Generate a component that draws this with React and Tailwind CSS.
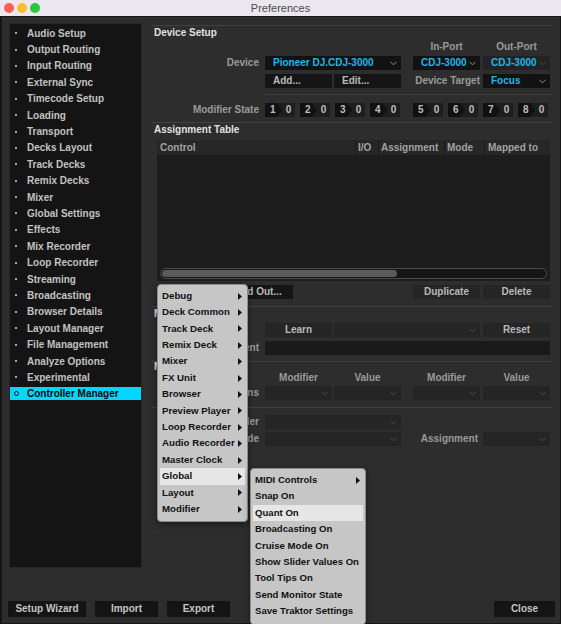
import React from "react";

function Chev({ dim }) {
  return (
    <svg width="7" height="5" viewBox="0 0 7 5" className="shrink-0">
      <polyline
        points="0.5,0.8 3.5,3.8 6.5,0.8"
        fill="none"
        stroke={dim ? "#4c4c4c" : "#909090"}
        strokeWidth="1"
      />
    </svg>
  );
}

function Drop({ cls, text, textCls = "", dim, bg = "bg-[#121212]" }) {
  return (
    <div className={`${cls} ${bg} h-[14px] flex items-center pl-[8px] pr-[4px]`}>
      <div className={`flex-1 overflow-hidden whitespace-nowrap leading-[14px] ${textCls}`}>{text}</div>
      <Chev dim={dim} />
    </div>
  );
}

function Btn({ cls, children, center, bg = "bg-[#151515]" }) {
  return (
    <div
      className={`${cls} ${bg} h-[14px] leading-[14px] whitespace-nowrap overflow-hidden text-[#b9b9b9] ${
        center ? "text-center" : "pl-[8px]"
      }`}
    >
      {children}
    </div>
  );
}

function Label({ children }) {
  return (
    <div className="w-[107px] flex justify-end whitespace-nowrap text-[#9a9a9a] leading-[14px]">
      {children}
    </div>
  );
}

function Mod({ n, cls }) {
  return (
    <div className={`${cls} w-[30px] h-[14px] bg-[#1e1e1e] flex text-[#bdbdbd] leading-[14px]`}>
      <div className="w-[17px] h-full bg-[#111111] [clip-path:polygon(0_0,70%_0,100%_50%,70%_100%,0_100%)] pl-[5px]">
        {n}
      </div>
      <div className="flex-1 text-center">0</div>
    </div>
  );
}

function Sep({ cls = "" }) {
  return <div className={`h-px bg-[#414141] ${cls}`} />;
}

function Arrow() {
  return (
    <svg width="4" height="7" viewBox="0 0 4 7" className="shrink-0">
      <polygon points="0,0 4,3.5 0,7" fill="#111" />
    </svg>
  );
}

const sidebarItems = [
  "Audio Setup",
  "Output Routing",
  "Input Routing",
  "External Sync",
  "Timecode Setup",
  "Loading",
  "Transport",
  "Decks Layout",
  "Track Decks",
  "Remix Decks",
  "Mixer",
  "Global Settings",
  "Effects",
  "Mix Recorder",
  "Loop Recorder",
  "Streaming",
  "Broadcasting",
  "Browser Details",
  "Layout Manager",
  "File Management",
  "Analyze Options",
  "Experimental",
  "Controller Manager",
];

const menu1 = [
  "Debug",
  "Deck Common",
  "Track Deck",
  "Remix Deck",
  "Mixer",
  "FX Unit",
  "Browser",
  "Preview Player",
  "Loop Recorder",
  "Audio Recorder",
  "Master Clock",
  "Global",
  "Layout",
  "Modifier",
];

const menu2 = [
  { t: "MIDI Controls", sub: true },
  { t: "Snap On" },
  { t: "Quant On", hl: true },
  { t: "Broadcasting On" },
  { t: "Cruise Mode On" },
  { t: "Show Slider Values On" },
  { t: "Tool Tips On" },
  { t: "Send Monitor State" },
  { t: "Save Traktor Settings" },
];

export default function App() {
  return (
    <div className="w-[561px] h-[624px] overflow-hidden relative flex flex-col bg-[#2d2d2d] [font-family:'Liberation_Sans',Arial,sans-serif] text-[10px] font-bold">
      {/* Title bar */}
      <div className="h-[16px] shrink-0 bg-[#ebe7ee] relative flex items-center justify-center">
        <div className="absolute left-[4px] top-[3px] flex gap-[3px]">
          <div className="w-[10px] h-[10px] rounded-full bg-[#fe5f57]" />
          <div className="w-[10px] h-[10px] rounded-full bg-[#febc2e]" />
          <div className="w-[10px] h-[10px] rounded-full bg-[#28c840]" />
        </div>
        <div className="text-[11px] font-normal text-[#4a4a4a] leading-[16px]">Preferences</div>
      </div>

      {/* Body */}
      <div className="flex-1 flex flex-col border-l-[2px] border-r border-b border-t border-[#161616]">
        <div className="h-[551px] flex">
          {/* Sidebar */}
          <div className="ml-[7px] mt-[6px] w-[133px] h-[545px] bg-[#141414] border border-[#252525] pt-px">
            {sidebarItems.map((s) => {
              const sel = s === "Controller Manager";
              return (
                <div key={s} className="h-[16.4px] flex items-center">
                  {sel ? (
                    <div className="w-full h-[13px] bg-[#00d6ff] flex items-center text-[#050505]">
                      <div className="ml-[4px] w-[5px] h-[5px] rounded-full border border-[#111]" />
                      <div className="ml-[8px] leading-[13px] whitespace-nowrap">{s}</div>
                    </div>
                  ) : (
                    <div className="w-full flex items-center text-[#c2c2c2]">
                      <div className="ml-[5px] w-[2px] h-[2px] bg-[#a8a8a8]" />
                      <div className="ml-[10px] leading-[13px] whitespace-nowrap">{s}</div>
                    </div>
                  )}
                </div>
              );
            })}
          </div>

          {/* Main */}
          <div className="ml-[10px] w-[401px] pt-[8px] flex flex-col">
            <Sep />
            <div className="h-[14px] leading-[14px] pl-[2px] text-[#e2e2e2]">Device Setup</div>
            <div className="flex h-[14px] leading-[14px] text-[#9a9a9a]">
              <div className="w-[261px]" />
              <div className="w-[67px] text-center">In-Port</div>
              <div className="w-[67px] ml-[3px] text-center">Out-Port</div>
            </div>
            <div className="flex h-[14px] mt-[2px]">
              <Label>Device</Label>
              <Drop cls="ml-[6px] w-[136px]" text="Pioneer DJ.CDJ-3000" textCls="text-[#1ab9ea]" />
              <Drop cls="ml-[12px] w-[67px]" text="CDJ-3000" textCls="text-[#1ab9ea] pr-[2px]" />
              <Drop cls="ml-[3px] w-[67px]" bg="bg-[#232323]" dim text="CDJ-3000" textCls="text-[#1ab9ea] pr-[2px]" />
            </div>
            <div className="flex h-[14px] mt-[4px]">
              <Label />
              <Btn cls="ml-[6px] w-[67px]">Add...</Btn>
              <Btn cls="ml-[2px] w-[67px]">Edit...</Btn>
              <div className="ml-[12px] w-[67px] flex justify-end whitespace-nowrap text-[#9a9a9a] leading-[14px]">
                Device Target
              </div>
              <Drop cls="ml-[3px] w-[67px]" text="Focus" textCls="text-[#1ab9ea]" />
            </div>
            <Sep cls="mt-[6px] ml-[113px]" />
            <div className="flex h-[14px] mt-[8px]">
              <Label>Modifier State</Label>
              <Mod n="1" cls="ml-[6px]" />
              <Mod n="2" cls="ml-[5px]" />
              <Mod n="3" cls="ml-[5px]" />
              <Mod n="4" cls="ml-[5px]" />
              <Mod n="5" cls="ml-[13px]" />
              <Mod n="6" cls="ml-[5px]" />
              <Mod n="7" cls="ml-[5px]" />
              <Mod n="8" cls="ml-[5px]" />
            </div>
            <Sep cls="mt-[5px]" />
            <div className="h-[13px] leading-[13px] pl-[2px] text-[#e2e2e2]">Assignment Table</div>

            {/* Table */}
            <div className="ml-[5px] w-[393px] h-[141px] mt-[4px] bg-[#1d1d1d] flex flex-col">
              <div className="h-[15px] flex bg-[#272727] text-[#a2a2a2] leading-[15px] whitespace-nowrap">
                <div className="w-[198px] pl-[3px]">Control</div>
                <div className="w-[23px] border-l border-[#1b1b1b] pl-[2px]">I/O</div>
                <div className="w-[66px] border-l border-[#1b1b1b] pl-[2px]">Assignment</div>
                <div className="w-[40px] border-l border-[#1b1b1b] pl-[2px]">Mode</div>
                <div className="flex-1 border-l border-[#1b1b1b] pl-[3px]">Mapped to</div>
              </div>
              <div className="flex-1 flex flex-col justify-end pb-[2px] px-[3px]">
                <div className="h-[11px] rounded-full border border-[#4c4c4c] bg-[#161616] p-px flex">
                  <div className="w-[235px] h-full rounded-full bg-[#5a5a5a]" />
                </div>
              </div>
            </div>

            <div className="flex h-[14px] mt-[4px]">
              <Btn cls="ml-[5px] w-[67px]">Add In...</Btn>
              <Btn cls="ml-[2px] w-[67px]">Add Out...</Btn>
              <Btn cls="ml-[120px] w-[67px]" center bg="bg-[#252525]">Duplicate</Btn>
              <Btn cls="ml-[3px] w-[67px]" center bg="bg-[#252525]">Delete</Btn>
            </div>
            <Sep cls="mt-[7px]" />
            <div className="h-[13px] leading-[13px] pl-[2px] text-[#e2e2e2]">Mapping Details</div>
            <div className="flex h-[14px] mt-[3px]">
              <Label />
              <Btn cls="ml-[6px] w-[67px]" center bg="bg-[#252525]">Learn</Btn>
              <Drop cls="ml-[2px] w-[146px]" bg="bg-[#252525]" dim text="" />
              <Btn cls="ml-[3px] w-[67px]" center bg="bg-[#252525]">Reset</Btn>
            </div>
            <div className="flex h-[14px] mt-[4px]">
              <Label>Comment</Label>
              <div className="ml-[6px] w-[285px] h-[14px] bg-[#1a1a1a]" />
            </div>
            <Sep cls="mt-[6px]" />
            <div className="h-[10px] leading-[10px] pl-[2px] text-[#e2e2e2]">Modifier Conditions</div>
            <div className="flex h-[12px] leading-[12px] text-[#9a9a9a]">
              <div className="w-[113px]" />
              <div className="w-[67px] text-center">Modifier</div>
              <div className="w-[67px] ml-[2px] text-center">Value</div>
              <div className="w-[67px] ml-[12px] text-center">Modifier</div>
              <div className="w-[67px] ml-[3px] text-center">Value</div>
            </div>
            <div className="flex h-[14px] mt-[2px]">
              <Label>Conditions</Label>
              <Drop cls="ml-[6px] w-[67px]" bg="bg-[#252525]" dim text="" />
              <Drop cls="ml-[2px] w-[67px]" bg="bg-[#252525]" dim text="" />
              <Drop cls="ml-[12px] w-[67px]" bg="bg-[#252525]" dim text="" />
              <Drop cls="ml-[3px] w-[67px]" bg="bg-[#252525]" dim text="" />
            </div>
            <Sep cls="mt-[7px]" />
            <div className="flex h-[14px] mt-[7px]">
              <Label>Type of Controller</Label>
              <Drop cls="ml-[6px] w-[136px]" bg="bg-[#252525]" dim text="" />
            </div>
            <div className="flex h-[14px] mt-[3px]">
              <Label>Interaction Mode</Label>
              <Drop cls="ml-[6px] w-[136px]" bg="bg-[#252525]" dim text="" />
              <div className="ml-[12px] w-[67px] flex justify-end whitespace-nowrap text-[#9a9a9a] leading-[14px] pr-[2px]">
                Assignment
              </div>
              <Drop cls="ml-[3px] w-[67px]" bg="bg-[#252525]" dim text="" />
            </div>
          </div>
        </div>

        {/* Bottom buttons */}
        <div className="flex h-[16px] mt-[33px]">
          <div className="ml-[6px] w-[78px] h-[16px] leading-[16px] bg-[#141414] text-center text-[#c4c4c4]">Setup Wizard</div>
          <div className="ml-[9px] w-[63px] h-[16px] leading-[16px] bg-[#141414] text-center text-[#c4c4c4]">Import</div>
          <div className="ml-[9px] w-[63px] h-[16px] leading-[16px] bg-[#141414] text-center text-[#c4c4c4]">Export</div>
          <div className="ml-auto mr-[5px] w-[61px] h-[16px] leading-[16px] bg-[#141414] text-center text-[#c4c4c4]">Close</div>
        </div>
      </div>

      {/* Context menu */}
      <div className="absolute left-[157px] top-[284px] w-[91px] pt-[3px] pb-[4px] bg-[#c6c6c6] border border-[#8c8c8c] rounded-[4px] shadow-[0_2px_6px_rgba(0,0,0,0.45)] text-[9.7px]">
        {menu1.map((m) => (
          <div
            key={m}
            className={`h-[16.4px] mx-[2px] pl-[2px] pr-[3px] flex items-center justify-between text-[#111] whitespace-nowrap ${
              m === "Global" ? "bg-[#e6e6e6]" : ""
            }`}
          >
            <span>{m}</span>
            <Arrow />
          </div>
        ))}
      </div>

      {/* Submenu */}
      <div className="absolute left-[250px] top-[468px] w-[116px] pt-[3px] pb-[4px] bg-[#c6c6c6] border border-[#8c8c8c] rounded-[4px] shadow-[0_2px_6px_rgba(0,0,0,0.45)] text-[9.6px]">
        {menu2.map((m) => (
          <div
            key={m.t}
            className={`h-[16.4px] mx-[2px] pl-[2px] pr-[3px] flex items-center justify-between text-[#111] whitespace-nowrap ${
              m.hl ? "bg-[#e6e6e6]" : ""
            }`}
          >
            <span>{m.t}</span>
            {m.sub ? <Arrow /> : null}
          </div>
        ))}
      </div>
    </div>
  );
}
